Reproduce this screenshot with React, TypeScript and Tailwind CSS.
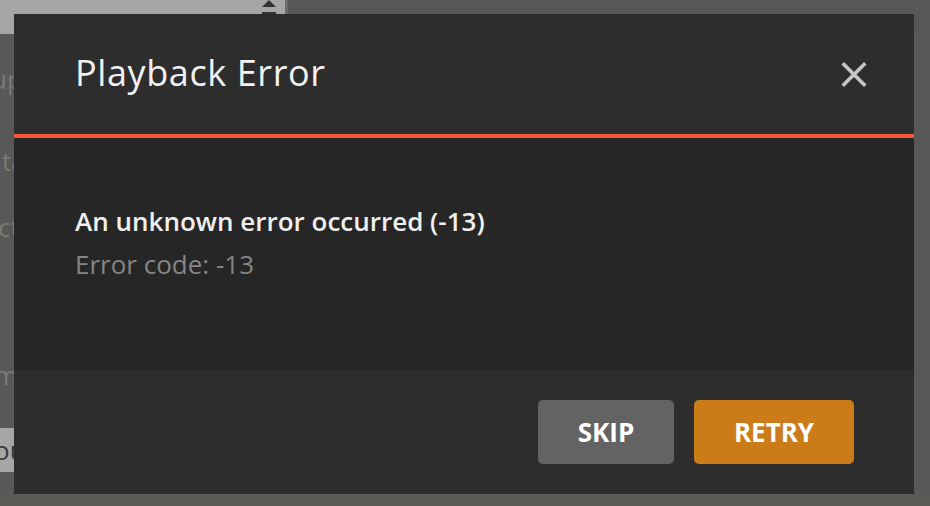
import React from "react";

export default function App() {
  return (
    <div
      className="relative w-[930px] h-[506px] overflow-hidden bg-[#585856]"
      style={{ fontFamily: '"Open Sans", "Noto Sans", sans-serif' }}
    >
      {/* dimmed page behind */}
      <div className="flex flex-col">
        <div className="flex h-[34px]">
          <div className="relative w-[285px] h-[34px] bg-[#a6a6a6]">
            <div className="absolute left-[262px] top-0 w-0 h-0 border-l-[7px] border-r-[7px] border-b-[7px] border-l-transparent border-r-transparent border-b-[#333333]" />
            <div className="absolute left-[262px] top-[12px] w-[14px] h-[3px] bg-[#333333]" />
          </div>
          <div className="w-[3px] h-[34px] bg-[#6a6a68]" />
          <div className="flex-1 bg-[#575757]" />
        </div>
        <div className="flex flex-col text-[26px] leading-[30px] text-[#7a7a77] whitespace-nowrap">
          <div className="mt-[30px] -ml-[9px]">up</div>
          <div className="mt-[52px] ml-[2px]">ta</div>
          <div className="mt-[36px] -ml-[2px]">ct</div>
          <div className="mt-[118px] -ml-[6px]">m</div>
          <div className="mt-[38px] w-[40px] h-[44px] bg-[#a6a6a6] text-[#3c3c3c] flex items-center -ml-[2px]">
            <span className="-ml-[4px]">ou</span>
          </div>
        </div>
      </div>
      <div className="absolute left-0 right-0 bottom-0 h-[12px] bg-[#5b5954]" />

      {/* modal */}
      <div className="absolute left-[14px] top-[14px] w-[900px] h-[480px] flex flex-col">
        <div className="h-[124px] bg-[#2d2d2d] border-b-4 border-[#f9583a] flex items-center justify-between pl-[61px] pr-[47px]">
          <h1 className="mb-[2px] text-[36px] leading-[40px] tracking-[0.6px] text-[#f2f2f2] font-normal">Playback Error</h1>
          <svg width="26" height="27" viewBox="0 0 26 27" className="mt-[1px]">
            <path d="M3 3.5 L23 23.5 M23 3.5 L3 23.5" stroke="#c6c6c6" strokeWidth="3.6" strokeLinecap="square" fill="none" />
          </svg>
        </div>
        <div className="h-[232px] bg-[#262626] pl-[61px] pt-[67px] flex flex-col">
          <div className="text-[26px] leading-[32px] font-semibold text-[#efefef]">An unknown error occurred (-13)</div>
          <div className="mt-[11px] text-[26px] leading-[32px] text-[#858585]">Error code: -13</div>
        </div>
        <div className="flex-1 bg-[#2d2d2d] flex items-center justify-end gap-[20px] pr-[60px]">
          <button className="w-[136px] h-[64px] rounded-[5px] bg-[#636363] text-white text-[26px] font-bold">SKIP</button>
          <button className="w-[160px] h-[64px] rounded-[5px] bg-[#cc7b19] text-white text-[26px] font-bold">RETRY</button>
        </div>
      </div>
    </div>
  );
}
